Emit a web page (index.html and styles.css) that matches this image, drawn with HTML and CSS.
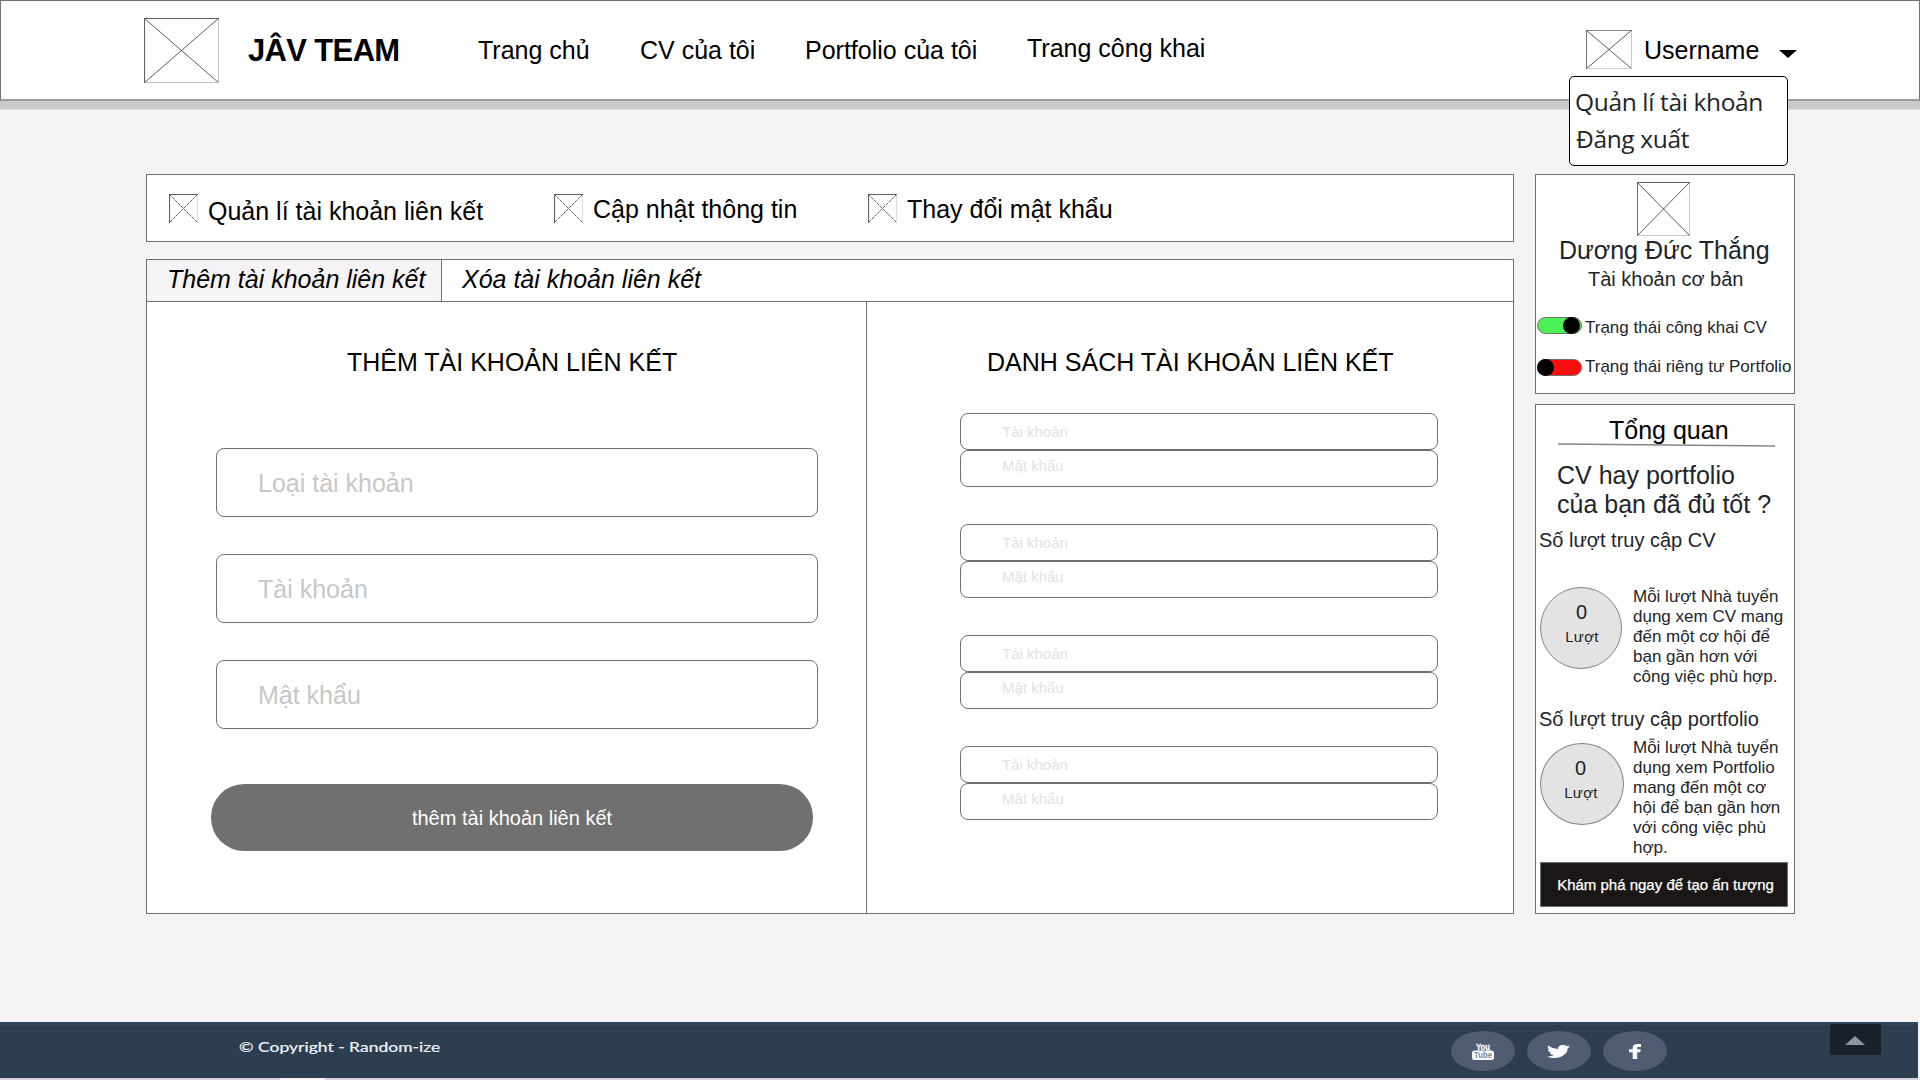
FILE: index.html
```html
<!DOCTYPE html>
<html lang="vi">
<head>
<meta charset="utf-8">
<title>JÂV TEAM</title>
<link rel="stylesheet" href="styles.css">
</head>
<body>
<svg class="defs" width="0" height="0">
  <symbol id="placeholder" viewBox="0 0 100 100" preserveAspectRatio="none">
    <path class="ph-cross" d="M1 1 99 99M99 1 1 99"/>
    <path class="ph-light" d="M99.4 0V99.4H0"/>
    <path class="ph-dark" d="M.6 100V.6H100"/>
  </symbol>
  <symbol id="placeholder-small" viewBox="0 0 29 29">
    <path class="ph-cross ph-dashed" d="M.5 .5 28.500 28.500M28.500 .5 .5 28.500"/>
    <path class="ph-faint" d="M28.500 0V29"/>
    <path class="ph-dark" d="M.5 29V.5H29"/>
  </symbol>
</svg>

<header class="header">
  <svg class="logo"><use href="#placeholder"/></svg>
  <div class="brand">JÂV TEAM</div>
  <nav class="nav">
    <a class="nav-home">Trang chủ</a>
    <a class="nav-cv">CV của tôi</a>
    <a class="nav-portfolio">Portfolio của tôi</a>
    <a class="nav-public">Trang công khai</a>
  </nav>
  <div class="user">
    <svg class="avatar-small"><use href="#placeholder"/></svg>
    <span class="username">Username</span>
    <svg class="caret" viewBox="0 0 18 8"><path d="M0 0H18L9 8Z"/></svg>
    <div class="dropdown">
      <a class="dd-account">Quản lí tài khoản</a>
      <a class="dd-logout">Đăng xuất</a>
    </div>
  </div>
</header>

<main class="main">
  <div class="content">
    <div class="toolbar">
      <a class="tool tool-link"><svg class="tool-icon"><use href="#placeholder-small"/></svg><span>Quản lí tài khoản liên kết</span></a>
      <a class="tool tool-info"><svg class="tool-icon"><use href="#placeholder-small"/></svg><span>Cập nhật thông tin</span></a>
      <a class="tool tool-pass"><svg class="tool-icon"><use href="#placeholder-small"/></svg><span>Thay đổi mật khẩu</span></a>
    </div>
    <section class="panel">
      <div class="tabs">
        <a class="tab tab-active">Thêm tài khoản liên kết</a>
        <a class="tab tab-delete">Xóa tài khoản liên kết</a>
      </div>
      <div class="columns">
        <div class="add">
          <h2 class="heading heading-add">THÊM TÀI KHOẢN LIÊN KẾT</h2>
          <div class="fields">
            <div class="field">Loại tài khoản</div>
            <div class="field">Tài khoản</div>
            <div class="field field-pass">Mật khẩu</div>
          </div>
          <div class="submit"><span>thêm tài khoản liên kết</span></div>
        </div>
        <div class="list">
          <h2 class="heading heading-list">DANH SÁCH TÀI KHOẢN LIÊN KẾT</h2>
          <div class="accounts">
            <div class="account"><div class="cell">Tài khoản</div><div class="cell cell-pass">Mật khẩu</div></div>
            <div class="account"><div class="cell">Tài khoản</div><div class="cell cell-pass">Mật khẩu</div></div>
            <div class="account"><div class="cell">Tài khoản</div><div class="cell cell-pass">Mật khẩu</div></div>
            <div class="account"><div class="cell">Tài khoản</div><div class="cell cell-pass">Mật khẩu</div></div>
          </div>
        </div>
      </div>
    </section>
  </div>

  <aside class="sidebar">
    <div class="card profile">
      <svg class="avatar"><use href="#placeholder"/></svg>
      <div class="name">Dương Đức Thắng</div>
      <div class="plan">Tài khoản cơ bản</div>
      <div class="switch-row switch-cv">
        <span class="switch on"><i></i></span><span class="switch-label">Trạng thái công khai CV</span>
      </div>
      <div class="switch-row switch-portfolio">
        <span class="switch off"><i></i></span><span class="switch-label">Trạng thái riêng tư Portfolio</span>
      </div>
    </div>
    <div class="card overview">
      <div class="overview-title">Tổng quan</div>
      <svg class="rule" viewBox="0 0 217 4"><path d="M0 1 217 3"/></svg>
      <div class="question">CV hay portfolio<br>của bạn đã đủ tốt ?</div>
      <div class="stat-title">Số lượt truy cập CV</div>
      <div class="stat stat-cv">
        <div class="circle"><b>0</b><span>Lượt</span></div>
        <p class="stat-text">Mỗi lượt Nhà tuyển<br>dụng xem CV mang<br>đến một cơ hội để<br>bạn gần hơn với<br>công việc phù hợp.</p>
      </div>
      <div class="stat-title stat-title-portfolio">Số lượt truy cập portfolio</div>
      <div class="stat stat-portfolio">
        <div class="circle circle-wide"><b>0</b><span>Lượt</span></div>
        <p class="stat-text">Mỗi lượt Nhà tuyển<br>dụng xem Portfolio<br>mang đến một cơ<br>hội để bạn gần hơn<br>với công việc phù<br>hợp.</p>
      </div>
      <div class="explore"><span>Khám phá ngay để tạo ấn tượng</span></div>
    </div>
  </aside>
</main>

<footer class="footer">
  <div class="copyright"><span>© Copyright - Random-ize</span></div>
  <div class="socials">
    <a class="social">
      <svg width="22" height="17" viewBox="0 0 22 17">
        <text class="yt-you" x="11" y="6.500" text-anchor="middle" textLength="14" lengthAdjust="spacingAndGlyphs">You</text>
        <rect x="0" y="7.500" width="22" height="9.500" rx="2.500" fill="#fff"/>
        <text class="yt-tube" x="11" y="15.200" text-anchor="middle" textLength="18" lengthAdjust="spacingAndGlyphs">Tube</text>
      </svg>
    </a>
    <a class="social">
      <svg width="23" height="13" viewBox="1 3 22 18" preserveAspectRatio="none">
        <path fill="#fff" d="M23 5.1a9 9 0 0 1-2.6.7 4.500 4.500 0 0 0 2-2.500c-.9.500-1.900.900-2.900 1.100a4.500 4.500 0 0 0-7.700 4.100A12.800 12.800 0 0 1 2.500 3.800a4.500 4.500 0 0 0 1.400 6c-.7 0-1.400-.2-2-.6v.1c0 2.200 1.500 4 3.600 4.400-.7.200-1.400.200-2 .1a4.500 4.500 0 0 0 4.200 3.100A9 9 0 0 1 1 18.800 12.800 12.800 0 0 0 20.700 7.400c.9-.6 1.700-1.400 2.300-2.300z"/>
      </svg>
    </a>
    <a class="social">
      <svg width="12" height="15" viewBox="0 0 12 15">
        <path fill="#fff" d="M12 0V2.900H9.700C8.600 2.900 8.200 3.300 8.200 4V5.200H11.700L11.300 8.200H8.200V15H3.700V8.200H0V5.200H3.700V3.700C3.700 1.300 5.400 0 8.400 0Z"/>
      </svg>
    </a>
  </div>
  <a class="to-top"><svg width="20" height="9" viewBox="0 0 20 9"><path fill="#8f969e" d="M10 0 20 9H0Z"/></svg></a>
</footer>
<div class="edge"></div>
</body>
</html>
```
FILE: styles.css
```css
* { box-sizing: border-box; }

body {
  margin: 0;
  height: 1080px;
  display: flex;
  flex-direction: column;
  overflow: hidden;
  background: #f5f3f5;
  color: #000;
  font: 25px/28px "Liberation Sans", Arial, sans-serif;
  white-space: nowrap;
}

svg { display: block; flex: none; }
.defs { position: absolute; }
.ph-cross, .ph-light, .ph-dark, .ph-faint { fill: none; vector-effect: non-scaling-stroke; }
.ph-cross { stroke: #333; stroke-width: .8; }
.ph-dashed { stroke-dasharray: 3 1; }
.ph-light { stroke: #bbb; stroke-width: 1; }
.ph-faint { stroke: #ddd; stroke-width: 1; }
.ph-dark { stroke: #606060; stroke-width: 1.2; }

/* Header */
.header {
  flex: none;
  display: flex;
  align-items: flex-start;
  height: 101px;
  padding-left: 143px;
  background: #fff;
  border: 1px solid #707070;
  border-bottom: 2px solid #9b9e9c;
  box-shadow: 0 8px 0 #cdcacd, 0 9px 0 #dedcde;
}
.logo { width: 75px; height: 65px; margin-top: 17px; }
.brand {
  width: 230px;
  margin: 33px 0 0 29px;
  font-size: 31px;
  line-height: 34px;
  font-weight: bold;
  letter-spacing: -.65px;
}
.nav {
  display: grid;
  grid-template-columns: 162px 165px 222px 559px;
  padding-top: 35px;
}
.nav-public { margin-top: -2px; }
.user { position: relative; display: flex; width: 212px; }
.avatar-small { width: 46px; height: 39px; margin-top: 29px; }
.username { width: 135px; margin: 35px 0 0 12px; }
.caret { width: 18px; height: 8px; margin-top: 49px; }
.dropdown {
  position: absolute;
  left: -17px;
  top: 75px;
  width: 219px;
  height: 90px;
  padding: 6px 0 0 5px;
  display: flex;
  flex-direction: column;
  background: #fff;
  border: 1px solid #000;
  border-radius: 5px;
  color: #212529;
  font: 24.5px/37px "Open Sans", "Noto Sans", sans-serif;
  letter-spacing: -.35px;
}
.dd-logout { padding-left: 1px; }

/* Main grid */
.main {
  flex: none;
  display: grid;
  grid-template-columns: 1368px 260px;
  column-gap: 21px;
  height: 921px;
  padding: 73px 0 0 146px;
}
.toolbar {
  display: flex;
  height: 68px;
  padding: 19px 0 0 22px;
  background: #fff;
  border: 1px solid #707070;
}
.tool { display: flex; gap: 10px; align-items: flex-start; }
.tool-link { width: 385px; }
.tool-info { width: 314px; }
.tool span { margin-top: 1px; }
.tool-link span { margin-top: 3px; }
.tool-icon { width: 29px; height: 29px; }

.panel {
  height: 655px;
  margin-top: 17px;
  background: #fff;
  border: 1px solid #707070;
}
.tabs {
  display: flex;
  height: 42px;
  border-bottom: 1px solid #707070;
  font-style: italic;
}
.tab { padding: 5px 0 0 20px; }
.tab-active { width: 295px; background: #f5f3f5; border-right: 1px solid #707070; }
.columns { display: grid; grid-template-columns: 720px 646px; height: 611px; }
.add { border-right: 1px solid #707070; }
.heading { margin: 0; padding-top: 46px; font-size: 25px; font-weight: normal; line-height: 28px; }
.heading-add { padding-left: 200px; }
.heading-list { padding-left: 120px; }
.fields { display: grid; gap: 37px; padding: 72px 0 0 69px; }
.field {
  width: 602px;
  height: 69px;
  padding: 20px 0 0 41px;
  border: 1px solid #707070;
  border-radius: 8px;
  color: #c7c7c7;
}
.submit {
  display: flex;
  justify-content: center;
  width: 602px;
  height: 67px;
  margin: 55px 0 0 64px;
  padding-top: 23px;
  border-radius: 33px;
  background: #707070;
  color: #fff;
  font-size: 20px;
  line-height: 22px;
}
.accounts { display: grid; gap: 37px; padding: 37px 0 0 93px; }
.account { width: 478px; }
.cell {
  height: 37px;
  padding: 9px 0 0 41px;
  border: 1px solid #707070;
  border-radius: 8px;
  color: #e2e2e2;
  font-size: 15px;
  line-height: 17px;
}
.cell-pass { padding-top: 6px; }

/* Sidebar */
.sidebar { color: #212529; }
.card { background: #fff; border: 1px solid #707070; }
.profile { height: 220px; padding-top: 7px; }
.avatar { width: 53px; height: 54px; margin-left: 101px; }
.name { padding-left: 23px; }
.plan { margin-top: 4px; padding-left: 52px; font-size: 20px; line-height: 22px; }
.switch-row { display: flex; gap: 3.5px; height: 20px; padding-left: .5px; font-size: 17px; line-height: 20px; }
.switch-label { padding-top: 1px; }
.switch-cv { margin-top: 27px; }
.switch-portfolio { margin-top: 19px; }
.switch {
  display: flex;
  flex: none;
  width: 45px;
  height: 17px;
  border: 1px solid #707070;
  border-radius: 9px;
}
.switch i { width: 17px; height: 17px; margin-top: -1px; border-radius: 50%; background: #000; }
.on { background: #4cf155; justify-content: flex-end; padding-right: 1px; }
.off { background: #ff0d0d; margin-top: 3px; }
.off i { margin-left: -1px; }

.overview { height: 510px; margin-top: 10px; padding: 11px 0 0 4px; }
.overview-title { padding-left: 69px; color: #000; }
.rule { width: 217px; height: 4px; margin: -1px 0 0 18px; }
.rule path { stroke: #858585; stroke-width: 1.4; }
.question { margin-top: 14px; padding-left: 17px; line-height: 29px; }
.stat-title { margin: 10px 0 0 -1px; font-size: 20px; line-height: 22px; }
.stat { display: flex; }
.stat-cv { margin-top: 36px; }
.circle {
  display: flex;
  flex-direction: column;
  align-items: center;
  width: 82px;
  height: 82px;
  padding-top: 13px;
  background: #e3e3e3;
  border: 1px solid #858585;
  border-radius: 50%;
}
.circle b { padding-left: 1px; font-size: 20px; line-height: 22px; font-weight: normal; }
.circle span { padding-left: 2px; margin-top: 5px; font-size: 15px; line-height: 17px; letter-spacing: .3px; }
.circle-wide { width: 84px; padding-right: 4px; }
.stat-text { width: 150px; margin: 0 0 0 11px; font-size: 17px; line-height: 20px; }
.stat-title-portfolio { margin-top: 21px; }
.stat-portfolio { margin-top: 13px; }
.stat-portfolio .stat-text { margin: -5px 0 0 9px; }
.explore {
  display: flex;
  justify-content: center;
  width: 248px;
  height: 45px;
  margin-top: 4px;
  padding: 13px 0 0 3px;
  background: #1b1716;
  border: 1px solid #707070;
  color: #fff;
  font-size: 15px;
  line-height: 17px;
  -webkit-text-stroke: .25px #fff;
}

/* Footer */
.footer {
  flex: none;
  display: flex;
  width: 1918px;
  height: 56px;
  background: #2d3e50;
  border-top: 3px solid #2f475b;
}
.copyright {
  width: 1212px;
  margin: 15px 0 0 239px;
  color: #eef1f4;
  font: 12.5px/15px Lato, sans-serif;
  -webkit-text-stroke: .2px #eef1f4;
}
.copyright span { display: inline-block; transform: scaleX(1.4); transform-origin: left; }
.socials { display: flex; gap: 12px; width: 379px; padding-top: 6px; }
.social {
  display: flex;
  align-items: center;
  justify-content: center;
  width: 64px;
  height: 40px;
  padding-right: 1px;
  border-radius: 50%;
  background: #515b72;
}
.yt-you { font: bold 8.5px "Liberation Sans", sans-serif; fill: #fff; stroke: #fff; stroke-width: .3px; }
.yt-tube { font: bold 8.5px "Liberation Sans", sans-serif; fill: #7c8496; }
.to-top {
  display: flex;
  align-items: center;
  justify-content: center;
  width: 51px;
  height: 31px;
  margin-top: -1px;
  padding: 2px 2px 0 0;
  border-radius: 2px;
  background: #19212b;
}
.edge {
  width: 1918px;
  height: 2px;
  background: linear-gradient(90deg, #d6d3d9 280px, #f5f3f5 280px 325px, #d6d3d9 325px);
}
```
